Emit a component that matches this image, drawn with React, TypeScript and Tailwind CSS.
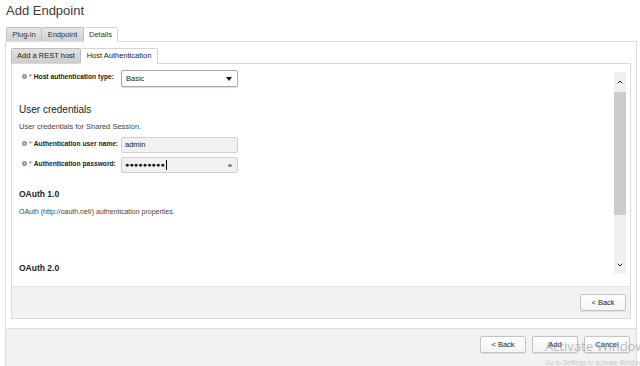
import { ChevronDown, ChevronUp } from "lucide-react"

function ReqLabel({ text }: { text: string }) {
  return (
    <div className="flex w-[99px] items-start gap-[2px] pt-[3px]">
      <span className="mt-[1px] h-[5px] w-[5px] shrink-0 rounded-full border border-[#777] bg-[#bbb]" />
      <span className="text-[7px] leading-[8px] text-[#d22]">*</span>
      <span className="whitespace-nowrap text-[6.7px] font-bold leading-[8px] text-[#222]">{text}</span>
    </div>
  )
}

function Btn({ label }: { label: string }) {
  return (
    <button className="flex h-[17px] w-[46px] items-center justify-center rounded-[2px] border border-[#c4c4c4] bg-gradient-to-b from-white to-[#f4f4f4] text-[7.5px] text-[#222] shadow-[0_1px_0_#e0e0e0]">
      {label}
    </button>
  )
}

export default function App() {
  return (
    <div className="relative h-[366px] w-[640px] overflow-hidden bg-white font-['Liberation_Sans',Arial,sans-serif] text-[#222]">
      <div className="h-[27px] pl-[6px] pt-[3px] text-[13px] leading-[16px] text-[#3a3a3a]">Add Endpoint</div>

      {/* outer tabs */}
      <div className="flex h-[14px] pl-[6px] text-[7.5px] leading-[13px]">
        <div className="w-[36px] rounded-t-[2px] border border-b-0 border-[#bdbdbd] bg-gradient-to-b from-[#e6e6e6] to-[#d0d0d0] text-center text-[#333]">Plug-in</div>
        <div className="w-[42px] rounded-t-[2px] border border-b-0 border-l-0 border-[#bdbdbd] bg-gradient-to-b from-[#e6e6e6] to-[#d0d0d0] text-center text-[#333]">Endpoint</div>
        <div className="relative z-10 -mb-px h-[15px] w-[34px] rounded-t-[2px] border border-b-0 border-l-0 border-[#d4d4d4] bg-white text-center text-[#333]">Details</div>
      </div>

      <div className="ml-[5px] flex w-[632px] flex-col border-x border-t border-[#dcdcdc]">
        <div className="px-[5px] pt-[6px]">
          {/* inner tabs */}
          <div className="flex h-[15px] text-[7.5px] leading-[14px]">
            <div className="w-[70px] rounded-t-[2px] border border-b-0 border-[#bdbdbd] bg-gradient-to-b from-[#e2e2e2] to-[#cdcdcd] text-center text-[#222]">Add a REST host</div>
            <div className="relative z-10 -mb-px h-[16px] w-[77px] rounded-t-[2px] border border-b-0 border-l-0 border-[#d4d4d4] bg-white text-center text-[#222]">Host Authentication</div>
          </div>

          <div className="flex flex-col border border-[#d9d9d9]">
            <div className="flex h-[222px]">
              <div className="flex flex-1 flex-col pl-[7px] pt-[6px]">
                <div className="flex h-[17px] pl-[3px]">
                  <ReqLabel text="Host authentication type:" />
                  <div className="flex h-[17px] w-[117px] items-center justify-between rounded-[2px] border border-[#a9a9a9] bg-white pl-[4px] pr-[5px] shadow-[0_1px_1px_#ddd]">
                    <span className="text-[7.5px]">Basic</span>
                    <span className="h-0 w-0 border-x-[3px] border-t-[4px] border-x-transparent border-t-[#111]" />
                  </div>
                </div>

                <div className="mt-[17px] text-[10px] leading-[12px] text-[#222]">User credentials</div>
                <div className="mt-[6px] text-[7.5px] leading-[10px] text-[#444]">User credentials for Shared Session.</div>

                <div className="mt-[5px] flex h-[16px] pl-[2px]">
                  <div className="w-[1px]" />
                  <ReqLabel text="Authentication user name:" />
                  <div className="flex h-[16px] w-[117px] items-center rounded-[2px] border border-[#d0d0d0] bg-[#f1f1f1] pl-[3px] text-[7.5px]">admin</div>
                </div>
                <div className="mt-[4px] flex h-[16px] pl-[3px]">
                  <ReqLabel text="Authentication password:" />
                  <div className="flex h-[16px] w-[117px] items-center justify-between rounded-[2px] border border-[#d0d0d0] bg-[#f1f1f1] pl-[3px] pr-[5px]">
                    <span className="flex items-center text-[7px] tracking-[0.2px] text-[#111]">
                      ●●●●●●●●●<span className="ml-[1px] h-[10px] w-[1px] bg-black" />
                    </span>
                    <span className="h-[3px] w-[4px] rounded-full bg-[#888]" />
                  </div>
                </div>

                <div className="mt-[15px] text-[8.5px] font-bold leading-[12px] text-[#222]">OAuth 1.0</div>
                <div className="mt-[7px] text-[7px] leading-[10px] text-[#444]">OAuth (http://oauth.net/) authentication properties.</div>
                <div className="mt-[45px] text-[8.5px] font-bold leading-[12px] text-[#222]">OAuth 2.0</div>
              </div>

              {/* scrollbar */}
              <div className="mb-[12px] mr-[4px] mt-[8px] flex w-[12px] flex-col bg-[#f0f0f0]">
                <div className="flex h-[20px] items-center justify-center">
                  <ChevronUp className="h-[8px] w-[8px] text-[#222]" strokeWidth={3} />
                </div>
                <div className="h-[123px] bg-[#cdcdcd]" />
                <div className="flex flex-1 items-end justify-center pb-[5px]">
                  <ChevronDown className="h-[8px] w-[8px] text-[#222]" strokeWidth={3} />
                </div>
              </div>
            </div>

            <div className="flex h-[32px] items-center justify-end border-t border-[#e4e4e4] bg-[#f2f2f2] pr-[4px]">
              <Btn label="< Back" />
            </div>
          </div>
        </div>

        <div className="mt-[9px] flex h-[40px] items-start justify-end gap-[6px] border-t border-[#dedede] bg-[#f2f2f2] pr-[6px] pt-[7px]">
          <Btn label="< Back" />
          <Btn label="Add" />
          <Btn label="Cancel" />
        </div>
      </div>

      {/* Windows activation watermark */}
      <div className="pointer-events-none absolute left-[545px] top-[338px] whitespace-nowrap font-['Open_Sans',sans-serif] text-[13px] leading-[16px] text-[#9a9a9a]/70">
        Activate Windows
      </div>
      <div className="pointer-events-none absolute left-[545px] top-[358px] whitespace-nowrap text-[6.5px] text-[#b0b0b0]/70">
        Go to Settings to activate Windows.
      </div>
    </div>
  )
}
